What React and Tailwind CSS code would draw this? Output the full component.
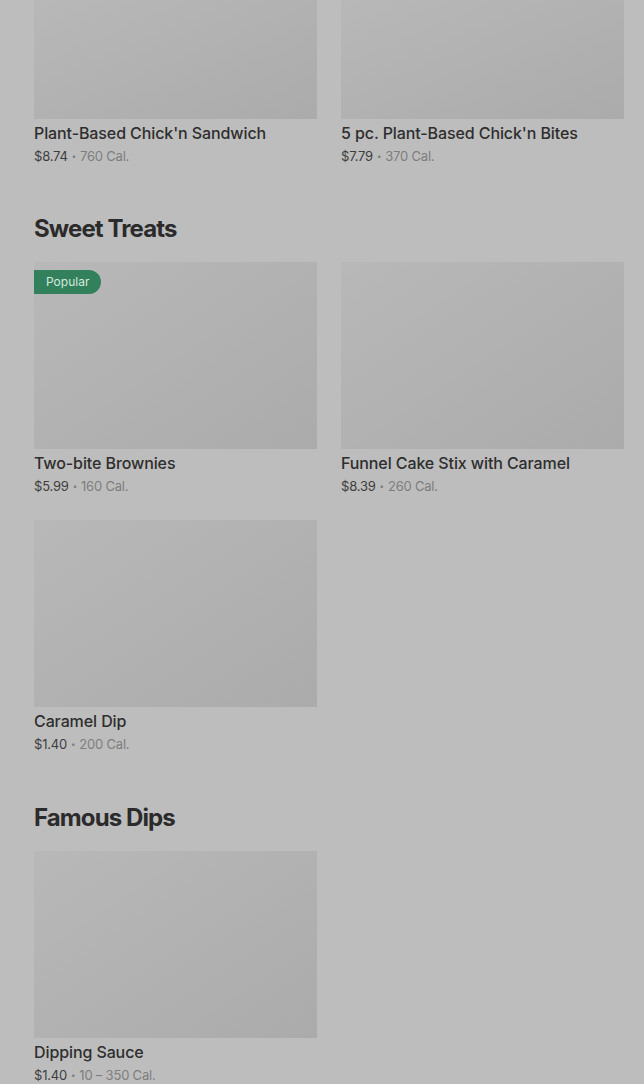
import React from "react";

function Item({ name, price, cal, popular, imgH = "h-[187px]" }) {
  return (
    <div className="flex flex-col">
      <div className={`relative ${imgH} w-full bg-gradient-to-br from-[#b8b8b8] to-[#ababab]`}>
        {popular && (
          <div className="absolute left-0 top-[8px] h-[24px] flex items-center pl-[12px] pr-[12px] rounded-r-full bg-[#33805c] text-[#d6e9dd] text-[12px] leading-none">
            Popular
          </div>
        )}
      </div>
      <div className="mt-[2px] text-[16px] leading-[24px] font-medium text-[#2e2e2e] tracking-[-0.1px]">{name}</div>
      <div className="mt-[1px] flex items-center text-[13px] leading-[20px] text-[#7d7d7d] tracking-[-0.2px]">
        <span className="text-[#3d3d3d]">{price}</span>
        <span className="mx-[4px] text-[8px] leading-none">•</span>
        <span>{cal}</span>
      </div>
    </div>
  );
}

export default function App() {
  return (
    <div
      className="min-h-[1084px] w-[644px] bg-[#bdbdbd] pl-[34px] pr-[20px] overflow-hidden"
      style={{ fontFamily: "Inter, 'Noto Sans', sans-serif" }}
    >
      <div className="grid grid-cols-2 gap-x-[24px] gap-y-[24px]">
        <Item imgH="h-[119px]" name="Plant-Based Chick'n Sandwich" price="$8.74" cal="760 Cal." />
        <Item imgH="h-[119px]" name="5 pc. Plant-Based Chick'n Bites" price="$7.79" cal="370 Cal." />
      </div>

      <h2 className="mt-[47px] mb-[17px] text-[24px] leading-[32px] font-bold text-[#2b2b2b] tracking-[-0.9px]">Sweet Treats</h2>
      <div className="grid grid-cols-2 gap-x-[24px] gap-y-[24px]">
        <Item popular name="Two-bite Brownies" price="$5.99" cal="160 Cal." />
        <Item name="Funnel Cake Stix with Caramel" price="$8.39" cal="260 Cal." />
        <Item name="Caramel Dip" price="$1.40" cal="200 Cal." />
      </div>

      <h2 className="mt-[48px] mb-[17px] text-[24px] leading-[32px] font-bold text-[#2b2b2b] tracking-[-0.9px]">Famous Dips</h2>
      <div className="grid grid-cols-2 gap-x-[24px] gap-y-[24px]">
        <Item name="Dipping Sauce" price="$1.40" cal="10 – 350 Cal." />
      </div>
    </div>
  );
}
